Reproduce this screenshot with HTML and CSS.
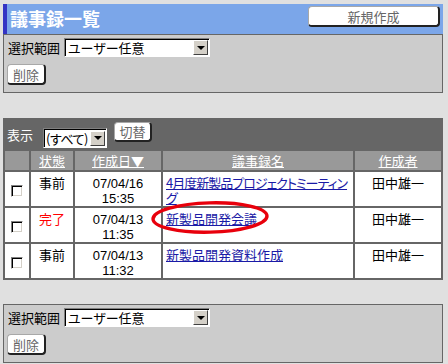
FILE: index.html
```html
<!DOCTYPE html>
<html lang="ja">
<head>
    <meta charset="UTF-8">
    <link rel="stylesheet" href="styles.css">
    <title>議事録一覧</title>
</head>
<body>
<div class="page">

    <div class="titlebar">
        <h1>議事録一覧</h1>
        <button class="btn btn-new">新規作成</button>
    </div>

    <div class="panel">
        <div class="panel-row">
            <span class="label">選択範囲</span>
            <div class="select select-wide"><span>ユーザー任意</span><span class="arrow"></span></div>
        </div>
        <button class="btn btn-del">削除</button>
    </div>

    <div class="list">
        <div class="toolbar">
            <span class="label">表示</span>
            <div class="select select-small"><span>(すべて)</span><span class="arrow"></span></div>
            <button class="btn btn-switch">切替</button>
        </div>
        <table>
            <colgroup>
                <col class="c-check">
                <col class="c-status">
                <col class="c-date">
                <col class="c-name">
                <col class="c-author">
            </colgroup>
            <thead>
                <tr>
                    <th></th>
                    <th><span class="sort">状態</span></th>
                    <th><span class="sort">作成日▼</span></th>
                    <th><span class="sort">議事録名</span></th>
                    <th><span class="sort">作成者</span></th>
                </tr>
            </thead>
            <tbody>
                <tr>
                    <td class="cb"><span class="check"></span></td>
                    <td class="center">事前</td>
                    <td class="center date"><span class="line">07/04/16</span><span class="line">15:35</span></td>
                    <td class="name"><a href="#" class="long">4月度新製品プロジェクトミーティング</a></td>
                    <td class="center">田中雄一</td>
                </tr>
                <tr>
                    <td class="cb"><span class="check"></span></td>
                    <td class="center done">完了</td>
                    <td class="center date"><span class="line">07/04/13</span><span class="line">11:35</span></td>
                    <td class="name">
                        <a href="#">新製品開発会議</a>
                        <!-- 注目の印 -->
                        <svg class="mark" viewBox="0 0 118 33">
                            <ellipse cx="59" cy="16.5" rx="57" ry="14.6" fill="none" stroke="#e8000c" stroke-width="3.4" transform="rotate(-1.5 59 16.5)"/>
                        </svg>
                    </td>
                    <td class="center">田中雄一</td>
                </tr>
                <tr>
                    <td class="cb"><span class="check"></span></td>
                    <td class="center">事前</td>
                    <td class="center date"><span class="line">07/04/13</span><span class="line">11:32</span></td>
                    <td class="name"><a href="#">新製品開発資料作成</a></td>
                    <td class="center">田中雄一</td>
                </tr>
            </tbody>
        </table>
    </div>

    <div class="panel panel-bottom">
        <div class="panel-row">
            <span class="label">選択範囲</span>
            <div class="select select-wide"><span>ユーザー任意</span><span class="arrow"></span></div>
        </div>
        <button class="btn btn-del">削除</button>
    </div>

</div>
</body>
</html>
```

FILE: styles.css
```css
body {
    margin: 4px 0 0 3px;
    background: #e0e0e0;
    font-family: "Noto Sans CJK JP", sans-serif;
    font-size: 13px;
    line-height: 15px;
    font-feature-settings: "palt"; /* kana proportionnels */
    color: #000;
}

.page {
    width: 440px;
}

/* Barre de titre */
.titlebar {
    display: flex;
    justify-content: space-between;
    align-items: flex-start;
    height: 30px;
    box-sizing: border-box;
    background: #7ba6e9;
    border-left: 4px solid #3434c4;
}

.titlebar h1 {
    margin: 0;
    padding: 3px 0 0 3px;
    font-size: 18px;
    line-height: 22px;
    font-weight: bold;
    font-feature-settings: normal;
    color: #fff;
}

/* Boutons */
.btn {
    display: block;
    box-sizing: border-box;
    height: 21px;
    padding: 0;
    font-family: inherit;
    font-size: 13px;
    line-height: 17px;
    color: #666;
    background: #fff;
    border: 1px solid #a8a8a8;
    border-right: 2px solid #222;
    border-bottom: 2px solid #222;
    border-radius: 4px;
}

.btn-new {
    width: 132px;
    margin: 2px 3px 0 0;
}

.btn-del {
    width: 39px;
    margin-top: 7px;
}

.btn-switch {
    width: 38px;
    height: 20px;
    margin: 4px 0 0 7px;
}

/* Panneaux gris */
.panel {
    background: #ccc;
    border: 1px solid #666;
    padding: 3px 3px 7px;
}

.panel-bottom {
    margin-top: 24px;
}

.panel-row {
    display: flex;
    align-items: center;
}

.panel .label {
    margin: 0 4px 0 1px;
}

/* Listes déroulantes */
.select {
    display: flex;
    align-items: center;
    justify-content: space-between;
    box-sizing: border-box;
    height: 19px;
    padding: 0 1px 0 3px;
    white-space: nowrap;
    overflow: hidden;
    color: #000;
    background: #fff;
    border: 1px solid;
    border-color: #808080 #fff #fff #808080;
    box-shadow: inset 1px 1px 0 #000;
}

.select-wide {
    width: 146px;
}

.select-small {
    width: 64px;
    height: 20px;
    margin: 10px 0 0 10px;
    padding-left: 2px;
    letter-spacing: -0.5px;
}

.arrow {
    display: flex;
    flex-shrink: 0;
    align-items: center;
    justify-content: center;
    width: 15px;
    height: 15px;
    box-sizing: border-box;
    background: #d4d0c8;
    border: 1px solid;
    border-color: #fff #404040 #404040 #fff;
}

.arrow::after {
    content: "";
    border-left: 4px solid transparent;
    border-right: 4px solid transparent;
    border-top: 4px solid #000;
}

/* Liste des comptes rendus */
.list {
    margin-top: 25px;
    background: #666;
}

.toolbar {
    display: flex;
    align-items: flex-start;
    height: 31px;
    padding-left: 4px;
    color: #fff;
}

.toolbar .label {
    margin-top: 9px;
}

table {
    width: 440px;
    table-layout: fixed;
    border-collapse: separate;
    border-spacing: 2px;
}

.c-check { width: 24px; }
.c-status { width: 42px; }
.c-date { width: 86px; }
.c-name { width: 190px; }
.c-author { width: 86px; }

th {
    height: 19px;
    padding: 0;
    background: #999;
    font-weight: normal;
    color: #fff;
}

.sort {
    text-decoration: underline;
}

tbody tr {
    height: 33px;
}

td {
    padding: 3px 1px 0 3px;
    background: #fff;
    vertical-align: top;
}

td.center {
    text-align: center;
    padding-left: 1px;
}

/* Dates sur deux lignes */
td.date {
    font-family: "Liberation Sans", sans-serif;
    padding-top: 4px;
}

.line {
    display: block;
    height: 15px;
}

td.cb {
    padding: 0;
    text-align: center;
    vertical-align: middle;
}

.check {
    display: inline-block;
    width: 12px;
    height: 12px;
    box-sizing: border-box;
    vertical-align: middle;
    background: #fff;
    border: 1px solid;
    border-color: #808080 #fff #fff #808080;
    box-shadow: inset 1px 1px 0 #000, inset -1px -1px 0 #d4d0c8;
}

.done {
    color: #f00;
}

td.name {
    position: relative;
}

td.name a {
    color: #1a1aa6;
}

/* Titre long : on resserre pour garder la coupure avant « グ » */
td.name a.long {
    letter-spacing: -1px;
}

/* Cercle rouge autour du titre */
.mark {
    position: absolute;
    left: -12px;
    top: -7px;
    width: 118px;
    height: 33px;
    overflow: visible;
    pointer-events: none;
}
```
